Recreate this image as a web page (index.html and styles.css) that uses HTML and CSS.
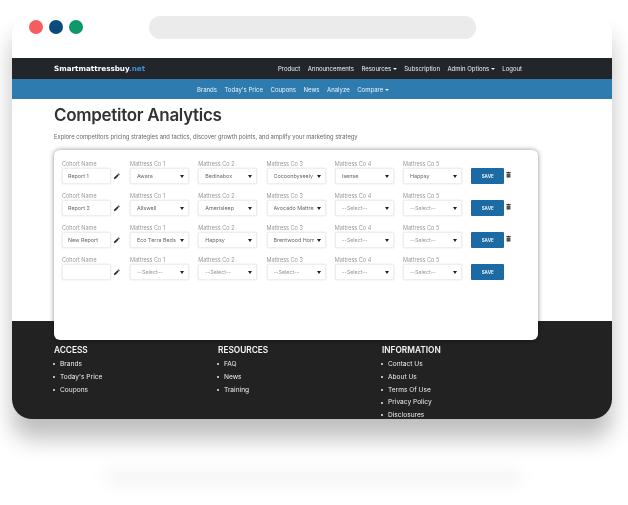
FILE: index.html
```html
<!DOCTYPE html>
<html lang="en">
<head>
    <meta charset="UTF-8">
    <meta name="viewport" content="width=device-width, initial-scale=1.0">
    <title>Competitor Analytics</title>
    <link rel="stylesheet" href="styles.css">
</head>
<body>
    <div class="window">
        <div class="chrome">
            <div class="dots">
                <span class="dot dot-red"></span>
                <span class="dot dot-blue"></span>
                <span class="dot dot-green"></span>
            </div>
            <div class="address"></div>
        </div>

        <nav class="topnav">
            <a class="logo">Smartmattressbuy<span class="logo-net">.net</span></a>
            <div class="links">
                <a>Product</a>
                <a>Announcements</a>
                <a class="has-menu">Resources</a>
                <a>Subscription</a>
                <a class="has-menu">Admin Options</a>
                <a>Logout</a>
            </div>
        </nav>
        <nav class="subnav">
            <div class="links">
                <a>Brands</a>
                <a>Today's Price</a>
                <a>Coupons</a>
                <a>News</a>
                <a>Analyze</a>
                <a class="has-menu">Compare</a>
            </div>
        </nav>

        <main class="content">
            <h1>Competitor Analytics</h1>
            <p class="intro">Explore competitors pricing strategies and tactics, discover growth points, and amplify your marketing strategy</p>

            <section class="card">
                <div class="row">
                    <div class="cohort">
                        <label>Cohort Name</label>
                        <div class="cohort-line"><div class="input">Report 1</div><svg class="icon" viewBox="0 0 12 12"><use href="#pencil"/></svg></div>
                    </div>
                    <div class="field"><label>Mattress Co 1</label><div class="select"><span>Awara</span></div></div>
                    <div class="field"><label>Mattress Co 2</label><div class="select"><span>Bedinabox</span></div></div>
                    <div class="field"><label>Mattress Co 3</label><div class="select"><span>Cocoonbyseely</span></div></div>
                    <div class="field"><label>Mattress Co 4</label><div class="select"><span>Isense</span></div></div>
                    <div class="field"><label>Mattress Co 5</label><div class="select"><span>Happsy</span></div></div>
                    <button class="save">SAVE</button>
                    <svg class="icon trash" viewBox="0 0 12 12"><use href="#trash"/></svg>
                </div>
                <div class="row">
                    <div class="cohort">
                        <label>Cohort Name</label>
                        <div class="cohort-line"><div class="input">Report 2</div><svg class="icon" viewBox="0 0 12 12"><use href="#pencil"/></svg></div>
                    </div>
                    <div class="field"><label>Mattress Co 1</label><div class="select"><span>Allswell</span></div></div>
                    <div class="field"><label>Mattress Co 2</label><div class="select"><span>Amerisleep</span></div></div>
                    <div class="field"><label>Mattress Co 3</label><div class="select"><span>Avocado Mattress</span></div></div>
                    <div class="field"><label>Mattress Co 4</label><div class="select is-empty"><span>--Select--</span></div></div>
                    <div class="field"><label>Mattress Co 5</label><div class="select is-empty"><span>--Select--</span></div></div>
                    <button class="save">SAVE</button>
                    <svg class="icon trash" viewBox="0 0 12 12"><use href="#trash"/></svg>
                </div>
                <div class="row">
                    <div class="cohort">
                        <label>Cohort Name</label>
                        <div class="cohort-line"><div class="input">New Report</div><svg class="icon" viewBox="0 0 12 12"><use href="#pencil"/></svg></div>
                    </div>
                    <div class="field"><label>Mattress Co 1</label><div class="select"><span>Eco Terra Beds</span></div></div>
                    <div class="field"><label>Mattress Co 2</label><div class="select"><span>Happsy</span></div></div>
                    <div class="field"><label>Mattress Co 3</label><div class="select"><span>Brentwood Home</span></div></div>
                    <div class="field"><label>Mattress Co 4</label><div class="select is-empty"><span>--Select--</span></div></div>
                    <div class="field"><label>Mattress Co 5</label><div class="select is-empty"><span>--Select--</span></div></div>
                    <button class="save">SAVE</button>
                    <svg class="icon trash" viewBox="0 0 12 12"><use href="#trash"/></svg>
                </div>
                <div class="row">
                    <div class="cohort">
                        <label>Cohort Name</label>
                        <div class="cohort-line"><div class="input"></div><svg class="icon" viewBox="0 0 12 12"><use href="#pencil"/></svg></div>
                    </div>
                    <div class="field"><label>Mattress Co 1</label><div class="select is-empty"><span>--Select--</span></div></div>
                    <div class="field"><label>Mattress Co 2</label><div class="select is-empty"><span>--Select--</span></div></div>
                    <div class="field"><label>Mattress Co 3</label><div class="select is-empty"><span>--Select--</span></div></div>
                    <div class="field"><label>Mattress Co 4</label><div class="select is-empty"><span>--Select--</span></div></div>
                    <div class="field"><label>Mattress Co 5</label><div class="select is-empty"><span>--Select--</span></div></div>
                    <button class="save">SAVE</button>
                </div>
            </section>
        </main>

        <footer class="footer">
            <div class="footer-col">
                <h2>ACCESS</h2>
                <ul>
                    <li>Brands</li>
                    <li>Today's Price</li>
                    <li>Coupons</li>
                </ul>
            </div>
            <div class="footer-col">
                <h2>RESOURCES</h2>
                <ul>
                    <li>FAQ</li>
                    <li>News</li>
                    <li>Training</li>
                </ul>
            </div>
            <div class="footer-col">
                <h2>INFORMATION</h2>
                <ul>
                    <li>Contact Us</li>
                    <li>About Us</li>
                    <li>Terms Of Use</li>
                    <li>Privacy Policy</li>
                    <li>Disclosures</li>
                </ul>
            </div>
        </footer>
    </div>
    <div class="floor-shadow"></div>

    <svg class="defs" width="0" height="0">
        <symbol id="pencil" viewBox="0 0 12 12">
            <path d="M1.5 10.5l.6-2.8 5.6-5.6 2.2 2.2-5.6 5.6z" fill="#2b2b2b"/>
            <path d="M8.3 1.5l.7-.7a.7.7 0 0 1 1 0l1.2 1.2a.7.7 0 0 1 0 1l-.7.7z" fill="#2b2b2b"/>
        </symbol>
        <symbol id="trash" viewBox="0 0 12 12">
            <path d="M2 2.2h2.4l.5-.9h2.2l.5.9H10v1.3H2z" fill="#2b2b2b"/>
            <path d="M2.8 4.2h6.4v6a1 1 0 0 1-1 1H3.8a1 1 0 0 1-1-1z" fill="#2b2b2b"/>
            <path d="M4.8 5.4v4.4M7.2 5.4v4.4" stroke="#cfcfcf" stroke-width=".7"/>
        </symbol>
    </svg>
</body>
</html>
```

FILE: styles.css
```css
html, body {
    margin: 0;
    height: 505px;
    overflow: hidden;
    background-color: #fff;
}
body {
    font-family: 'Inter', 'Noto Sans', sans-serif;
    padding: 14px 16px 0 12px;
    box-sizing: border-box;
}
.defs {
    display: block;
}
.window {
    width: 600px;
    height: 405px;
    background-color: #fff;
    border-radius: 20px;
    overflow: hidden;
    box-shadow: 0 20px 22px rgba(0, 0, 0, 0.25);
    filter: blur(0.4px);
    display: flex;
    flex-direction: column;
}

/* browser bar */
.chrome {
    height: 44px;
    flex: none;
    display: flex;
    align-items: flex-start;
    padding: 2px 0 0 17px;
    box-sizing: border-box;
}
.dots {
    display: flex;
    gap: 6px;
    margin-top: 4px;
}
.dot {
    width: 14px;
    height: 14px;
    border-radius: 50%;
}
.dot-red { background-color: #f55d60; }
.dot-blue { background-color: #0d4a7c; }
.dot-green { background-color: #0f9868; }
.address {
    width: 327px;
    height: 23px;
    margin-left: 66px;
    border-radius: 12px;
    background-color: #ebebeb;
}

/* navs */
.topnav {
    height: 21px;
    flex: none;
    background-color: #22262b;
    display: flex;
    align-items: center;
    justify-content: space-between;
    padding: 0 90px 0 42px;
    color: #f2f2f2;
    font-size: 6px;
}
.logo {
    font-family: 'DejaVu Sans', sans-serif;
    font-weight: 700;
    font-size: 7.2px;
    color: #fff;
    will-change: transform;
}
.logo-net {
    color: #3d8fd0;
}
.links {
    display: flex;
    gap: 7.5px;
    will-change: transform;
}
.subnav {
    height: 20px;
    flex: none;
    box-sizing: border-box;
    background-color: #2e7bb0;
    display: flex;
    align-items: center;
    padding-left: 185px;
    color: #e8f2f9;
    font-size: 6px;
}
.has-menu::after {
    content: "";
    display: inline-block;
    margin-left: 1.5px;
    vertical-align: 1px;
    border: 2px solid transparent;
    border-top-color: currentColor;
    border-bottom: 0;
}

/* main */
.content {
    flex: none;
    height: 222px;
    padding: 5px 0 0 42px;
    box-sizing: border-box;
    position: relative;
    z-index: 1;
}
h1 {
    margin: 0;
    font-size: 17px;
    letter-spacing: -0.3px;
    line-height: 22px;
    font-weight: 600;
    color: #333;
}
.intro {
    margin: 7px 0 0;
    font-size: 5.8px;
    line-height: 8px;
    color: #666;
}
.card {
    width: 484px;
    height: 190px;
    margin-top: 9px;
    padding: 2px 0 0 8px;
    box-sizing: border-box;
    background-color: #fff;
    border-radius: 6px;
    box-shadow: 0 0 5px rgba(0, 0, 0, 0.45);
}
.row {
    display: grid;
    grid-template-columns: 68px repeat(5, 68.25px) 34px 12px;
    align-items: end;
    height: 32px;
}
label {
    display: block;
    font-size: 5.5px;
    line-height: 8px;
    color: #999;
}
.cohort-line {
    display: flex;
    align-items: center;
}
.input, .select {
    height: 16px;
    box-sizing: border-box;
    background-color: #fff;
    border: 1px solid #eee;
    border-radius: 1.5px;
    box-shadow: 0 0 2px rgba(0, 0, 0, 0.14);
    font-size: 5.4px;
    line-height: 14px;
    color: #666;
    white-space: nowrap;
}
.input {
    width: 49px;
    padding-left: 5px;
}
.select {
    width: 59px;
    padding: 0 11px 0 6px;
    position: relative;
}
.select span {
    display: block;
    overflow: hidden;
}
.is-empty {
    color: #999;
}
.select::after {
    content: "";
    position: absolute;
    right: 4px;
    top: 5.5px;
    border: 2.5px solid transparent;
    border-top: 3px solid #222;
    border-bottom: 0;
}
.icon {
    width: 7px;
    height: 7px;
    margin-left: 1.5px;
}
.save {
    width: 33px;
    height: 16px;
    padding: 0;
    border: none;
    border-radius: 1px;
    background-color: #1b6aa3;
    color: #e6f0f7;
    font-family: inherit;
    font-size: 4.6px;
    font-weight: 700;
}
.trash {
    margin: 0 0 6px 0;
}

/* footer */
.footer {
    flex: 1;
    background-color: #222;
    color: #eee;
    display: grid;
    grid-template-columns: repeat(3, 164px);
    padding: 23.5px 0 0 42px;
}
.footer-col {
    will-change: transform;
}
h2 {
    margin: 0 0 3px;
    font-size: 8.3px;
    line-height: 10px;
    font-weight: 600;
    color: #f5f5f5;
}
ul {
    margin: 0;
    padding: 0;
    list-style: none;
    font-size: 6.6px;
    line-height: 12.75px;
}
li {
    display: flex;
    align-items: center;
    gap: 5px;
}
li::before {
    content: "";
    width: 2px;
    height: 2px;
    margin-left: -1px;
    border-radius: 50%;
    background-color: #eee;
}

.floor-shadow {
    width: 415px;
    height: 12px;
    margin: 52px 0 0 93px;
    background-color: rgba(0, 0, 0, 0.05);
    filter: blur(8px);
}
```
